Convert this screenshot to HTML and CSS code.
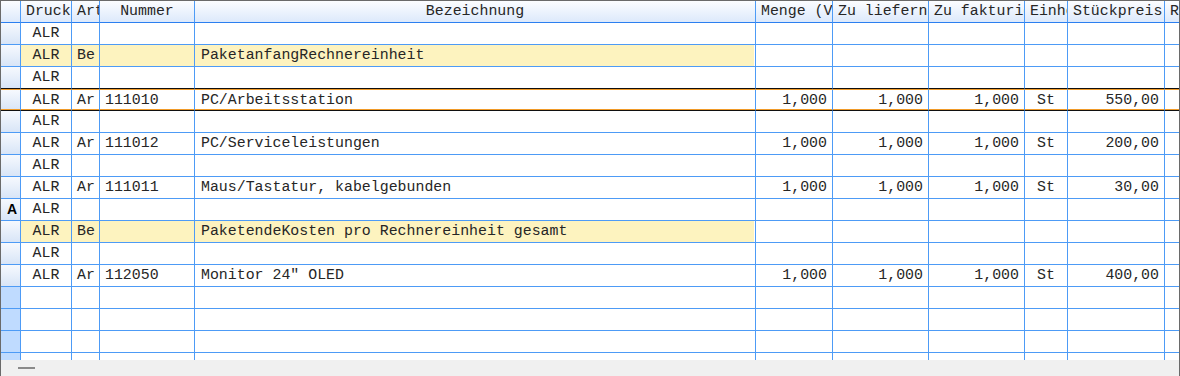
FILE: index.html
```html
<!DOCTYPE html>
<html lang="de">

<head>
    <meta charset="UTF-8">
    <title>Positionen</title>
    <link rel="stylesheet" href="styles.css">
</head>

<body>
    <div class="frame">
        <div class="grid">
            <div class="row head">
                <div class="cell sel-col"></div>
                <div class="cell">Druck</div>
                <div class="cell">Art</div>
                <div class="cell">Nummer</div>
                <div class="cell">Bezeichnung</div>
                <div class="cell">Menge (Vk)</div>
                <div class="cell">Zu liefern</div>
                <div class="cell">Zu fakturieren</div>
                <div class="cell">Einheit</div>
                <div class="cell">Stückpreis</div>
                <div class="cell">Rabatt</div>
            </div>

            <div class="row">
                <div class="cell sel-col"></div>
                <div class="cell c">ALR</div>
                <div class="cell"></div><div class="cell"></div><div class="cell"></div>
                <div class="cell"></div><div class="cell"></div><div class="cell"></div>
                <div class="cell"></div><div class="cell"></div><div class="cell"></div>
            </div>

            <div class="row hl">
                <div class="cell sel-col"></div>
                <div class="cell c">ALR</div>
                <div class="cell">Be</div>
                <div class="cell"></div>
                <div class="cell bez">PaketanfangRechnereinheit</div>
                <div class="cell"></div><div class="cell"></div><div class="cell"></div>
                <div class="cell"></div><div class="cell"></div><div class="cell"></div>
            </div>

            <div class="row above-current">
                <div class="cell sel-col"></div>
                <div class="cell c">ALR</div>
                <div class="cell"></div><div class="cell"></div><div class="cell"></div>
                <div class="cell"></div><div class="cell"></div><div class="cell"></div>
                <div class="cell"></div><div class="cell"></div><div class="cell"></div>
            </div>

            <div class="row current">
                <div class="cell sel-col"></div>
                <div class="cell c">ALR</div>
                <div class="cell">Ar</div>
                <div class="cell">111010</div>
                <div class="cell bez">PC/Arbeitsstation</div>
                <div class="cell r">1,000</div>
                <div class="cell r">1,000</div>
                <div class="cell r">1,000</div>
                <div class="cell c">St</div>
                <div class="cell r">550,00</div>
                <div class="cell"></div>
            </div>

            <div class="row">
                <div class="cell sel-col"></div>
                <div class="cell c">ALR</div>
                <div class="cell"></div><div class="cell"></div><div class="cell"></div>
                <div class="cell"></div><div class="cell"></div><div class="cell"></div>
                <div class="cell"></div><div class="cell"></div><div class="cell"></div>
            </div>

            <div class="row">
                <div class="cell sel-col"></div>
                <div class="cell c">ALR</div>
                <div class="cell">Ar</div>
                <div class="cell">111012</div>
                <div class="cell bez">PC/Serviceleistungen</div>
                <div class="cell r">1,000</div>
                <div class="cell r">1,000</div>
                <div class="cell r">1,000</div>
                <div class="cell c">St</div>
                <div class="cell r">200,00</div>
                <div class="cell"></div>
            </div>

            <div class="row">
                <div class="cell sel-col"></div>
                <div class="cell c">ALR</div>
                <div class="cell"></div><div class="cell"></div><div class="cell"></div>
                <div class="cell"></div><div class="cell"></div><div class="cell"></div>
                <div class="cell"></div><div class="cell"></div><div class="cell"></div>
            </div>

            <div class="row">
                <div class="cell sel-col"></div>
                <div class="cell c">ALR</div>
                <div class="cell">Ar</div>
                <div class="cell">111011</div>
                <div class="cell bez">Maus/Tastatur, kabelgebunden</div>
                <div class="cell r">1,000</div>
                <div class="cell r">1,000</div>
                <div class="cell r">1,000</div>
                <div class="cell c">St</div>
                <div class="cell r">30,00</div>
                <div class="cell"></div>
            </div>

            <div class="row">
                <div class="cell sel-col marker">A</div>
                <div class="cell c">ALR</div>
                <div class="cell"></div><div class="cell"></div><div class="cell"></div>
                <div class="cell"></div><div class="cell"></div><div class="cell"></div>
                <div class="cell"></div><div class="cell"></div><div class="cell"></div>
            </div>

            <div class="row hl">
                <div class="cell sel-col"></div>
                <div class="cell c">ALR</div>
                <div class="cell">Be</div>
                <div class="cell"></div>
                <div class="cell bez">PaketendeKosten pro Rechnereinheit gesamt</div>
                <div class="cell"></div><div class="cell"></div><div class="cell"></div>
                <div class="cell"></div><div class="cell"></div><div class="cell"></div>
            </div>

            <div class="row">
                <div class="cell sel-col"></div>
                <div class="cell c">ALR</div>
                <div class="cell"></div><div class="cell"></div><div class="cell"></div>
                <div class="cell"></div><div class="cell"></div><div class="cell"></div>
                <div class="cell"></div><div class="cell"></div><div class="cell"></div>
            </div>

            <div class="row">
                <div class="cell sel-col"></div>
                <div class="cell c">ALR</div>
                <div class="cell">Ar</div>
                <div class="cell">112050</div>
                <div class="cell bez">Monitor 24" OLED</div>
                <div class="cell r">1,000</div>
                <div class="cell r">1,000</div>
                <div class="cell r">1,000</div>
                <div class="cell c">St</div>
                <div class="cell r">400,00</div>
                <div class="cell"></div>
            </div>

            <!-- empty rows -->
            <div class="row empty">
                <div class="cell sel-col"></div>
                <div class="cell"></div><div class="cell"></div><div class="cell"></div><div class="cell"></div>
                <div class="cell"></div><div class="cell"></div><div class="cell"></div>
                <div class="cell"></div><div class="cell"></div><div class="cell"></div>
            </div>
            <div class="row empty">
                <div class="cell sel-col"></div>
                <div class="cell"></div><div class="cell"></div><div class="cell"></div><div class="cell"></div>
                <div class="cell"></div><div class="cell"></div><div class="cell"></div>
                <div class="cell"></div><div class="cell"></div><div class="cell"></div>
            </div>
            <div class="row empty">
                <div class="cell sel-col"></div>
                <div class="cell"></div><div class="cell"></div><div class="cell"></div><div class="cell"></div>
                <div class="cell"></div><div class="cell"></div><div class="cell"></div>
                <div class="cell"></div><div class="cell"></div><div class="cell"></div>
            </div>
            <div class="row empty">
                <div class="cell sel-col"></div>
                <div class="cell"></div><div class="cell"></div><div class="cell"></div><div class="cell"></div>
                <div class="cell"></div><div class="cell"></div><div class="cell"></div>
                <div class="cell"></div><div class="cell"></div><div class="cell"></div>
            </div>
        </div>

        <div class="statusbar">
            <div class="grip"></div>
        </div>
    </div>
</body>

</html>
```

FILE: styles.css
```css
* {
    margin: 0;
    padding: 0;
    box-sizing: border-box;
}

body {
    font-family: "Liberation Mono", "Courier New", monospace;
    font-size: 14.9px;
    color: #262626;
    background-color: #f0f0f0;
}

.frame {
    width: 1180px;
    height: 376px;
    border: 1px solid #6a6a6a;
    border-bottom: none;
    display: flex;
    flex-direction: column;
    background-color: #f0f0f0;
}

.grid {
    flex: none;
    height: 359px;
    overflow: hidden;
    background-color: #ffffff;
}

.row {
    display: grid;
    grid-template-columns: 20px 51px 28px 95px 561px 77px 96px 96px 43px 97px 14px;
    height: 22px;
}

.cell {
    border-right: 1px solid #4d9bf6;
    border-bottom: 1px solid #4d9bf6;
    padding: 0 5px;
    line-height: 21px;
    white-space: nowrap;
    overflow: hidden;
}

.cell:last-child {
    border-right: none;
}

.cell.c {
    text-align: center;
}

.cell.r {
    text-align: right;
}

.cell.bez {
    padding-left: 6px;
}

/* header */
.head {
    background: linear-gradient(to bottom, #fcfdff, #dbe8fb);
}

.head .cell {
    text-align: center;
    border-bottom-color: #2b7ff0;
}

/* row selector column */
.sel-col {
    padding: 0;
    background: linear-gradient(to bottom, #f6f9fe, #d8e5f7);
}

.head .sel-col {
    background: transparent;
}

.marker {
    font-family: "Liberation Sans", Arial, sans-serif;
    font-size: 14px;
    font-weight: bold;
    color: #000;
    padding-left: 6px;
}

.empty .sel-col {
    background: #bfdbff;
}

/* package rows */
.hl .cell:nth-child(2),
.hl .cell:nth-child(3),
.hl .cell:nth-child(4) {
    background-color: #fdf3bf;
}

.hl .cell:nth-child(5) {
    background: linear-gradient(to right, #fdf3bf calc(100% - 1px), #ffffff 0);
}

/* current row frame: black outer line, orange inner line */
.row.above-current .cell {
    border-bottom: 1px solid #101010;
}

.row.current .cell {
    border-top: 1px solid #f09a28;
    border-bottom: 1px solid #101010;
    line-height: 20px;
    background-image: linear-gradient(to top, #f09a28 0, #f09a28 1px, transparent 1px);
}

.row.current .sel-col {
    background-image: linear-gradient(to top, #f09a28 0, #f09a28 1px, transparent 1px),
        linear-gradient(to bottom, #f6f9fe, #d8e5f7);
}

.statusbar {
    flex: 1;
    padding: 7px 0 0 17px;
    background-color: #f0f0f0;
}

.grip {
    width: 17px;
    height: 2px;
    background-color: #8a8a8a;
}
```
